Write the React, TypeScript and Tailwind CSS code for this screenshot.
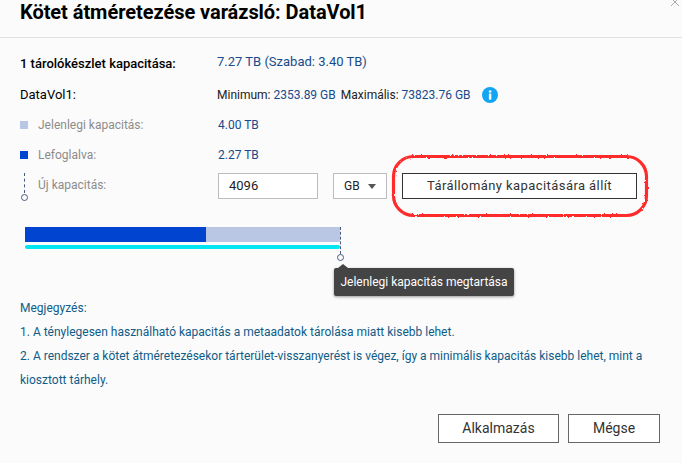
const Row = ({ label, marker, muted, bold, children }: { label: string; marker?: React.ReactNode; muted?: boolean; bold?: boolean; children: React.ReactNode }) => (
  <div className="flex items-center h-[30px]">
    <div className={`w-[197px] flex items-center ${muted ? "text-[12px] text-[#8c8c8c]" : "text-[13px] text-black"} ${bold ? "font-medium pb-[2px]" : ""}`}>
      {marker && <div className="w-[18px] flex justify-start">{marker}</div>}
      <span>{label}</span>
    </div>
    <div className="flex items-center text-[12px]">{children}</div>
  </div>
);

const Val = ({ children }: { children: React.ReactNode }) => <span className="text-[#174a8c]">{children}</span>;

export default function App() {
  return (
    <div className="relative w-[682px] h-[463px] overflow-hidden bg-[#fbfbfb] font-['Roboto',sans-serif]">
      {/* fejléc */}
      <div className="h-[38px] border-b border-[#e2e2e2] pl-[20px] relative">
        <h1 className="text-[20px] leading-[25px] tracking-[-0.05px] font-bold text-black">Kötet átméretezése varázsló: DataVol1</h1>
        <svg className="absolute right-0 top-0" width="12" height="8" viewBox="0 0 12 8">
          <path d="M1 -2L9 6M9 -2L1 6" stroke="#aaa" strokeWidth="1" fill="none" />
        </svg>
      </div>

      <div className="pl-[20px] pt-[12px]">
        <Row label="1 tárolókészlet kapacitása:" bold>
          <span className="text-[13px] text-[#174a8c] mb-[6px]">7.27 TB (Szabad: 3.40 TB)</span>
        </Row>
        <Row label="DataVol1:">
          <span className="text-[#222]">Minimum:&nbsp;</span>
          <Val>2353.89 GB</Val>
          <span className="text-[#222] ml-[5px]">Maximális:&nbsp;</span>
          <Val>73823.76 GB</Val>
          <svg className="ml-[11px]" width="16" height="16" viewBox="0 0 16 16">
            <circle cx="8" cy="8" r="8" fill="#12a5f4" />
            <rect x="6.9" y="6.6" width="2.4" height="6" fill="#fff" />
            <rect x="6.9" y="3.4" width="2.4" height="2.2" fill="#fff" />
          </svg>
        </Row>
        <Row label="Jelenlegi kapacitás:" muted marker={<div className="w-2 h-2 bg-[#b9c7e4]" />}>
          <span className="ml-[1px]"><Val>4.00 TB</Val></span>
        </Row>
        <Row label="Lefoglalva:" muted marker={<div className="w-2 h-2 bg-[#0044d0]" />}>
          <span className="ml-[1px]"><Val>2.27 TB</Val></span>
        </Row>
        <Row
          label="Új kapacitás:"
          muted
          marker={
            <div className="relative h-[16px] w-[8px]">
              <div className="absolute left-[4px] -top-[4px] h-[20px] border-l border-dashed border-[#4a5a80]" />
              <div className="absolute left-[1px] top-[17px] w-[7px] h-[7px] rounded-full border border-[#4a5a80]" />
            </div>
          }
        >
          <div className="flex items-center mt-[2px] ml-[1px]">
            <div className="w-[100px] h-[26px] border border-[#bdbdbd] bg-white pl-[10px] flex items-center text-[13px] text-[#222]">4096</div>
            <div className="ml-[15px] w-[54px] h-[26px] border border-[#bdbdbd] bg-white pl-[10px] pr-[10px] flex items-center justify-between text-[12px] text-[#222]">
              GB
              <span className="w-0 h-0 border-x-[4px] border-x-transparent border-t-[5px] border-t-[#555]" />
            </div>
            <button className="ml-[15px] w-[235px] h-[26px] border border-[#333] bg-white text-[13px] tracking-[0.42px] text-[#333]">Tárállomány kapacitására állít</button>
          </div>
        </Row>

        {/* sáv */}
        <div className="relative ml-[5px] mt-[27px] w-[315px]">
          <div className="flex h-[15px]">
            <div className="w-[181px] bg-[#0044d0]" />
            <div className="flex-1 bg-[#b9c7e4]" />
          </div>
          <div className="mt-[3px] h-[4px] rounded-full bg-[#00e5f2]" />
          <div className="absolute left-[315px] top-0 h-[27px] border-l border-dashed border-[#4a5a80]" />
          <div className="absolute left-[312px] top-[27px] w-[7px] h-[7px] rounded-full border border-[#4a5a80]" />
          {/* tooltip */}
          <div className="absolute left-[309px] top-[41px] w-[180px] h-[28px] rounded-[2px] bg-[#444] shadow-[0_1px_3px_rgba(0,0,0,0.4)] flex items-center justify-center text-[12px] text-white whitespace-nowrap">
            <span className="absolute left-[4px] -top-[4px] w-0 h-0 border-x-[5px] border-x-transparent border-b-[4px] border-b-[#444]" />
            Jelenlegi kapacitás megtartása
          </div>
        </div>

        {/* megjegyzés */}
        <div className="mt-[47px] pr-[30px] text-[12px] leading-[24px] text-[#0f5c88]">
          <p>Megjegyzés:</p>
          <p>1. A ténylegesen használható kapacitás a metaadatok tárolása miatt kisebb lehet.</p>
          <p>2. A rendszer a kötet átméretezésekor tárterület-visszanyerést is végez, így a minimális kapacitás kisebb lehet, mint a kiosztott tárhely.</p>
        </div>

        <div className="mt-[22px] pr-[22px] flex justify-end gap-[9px]">
          <button className="w-[121px] h-[29px] border border-[#666] bg-white text-[14px] text-[#333]">Alkalmazás</button>
          <button className="w-[92px] h-[29px] border border-[#666] bg-white text-[14px] text-[#333]">Mégse</button>
        </div>
      </div>

      {/* piros kézi jelölés */}
      <svg className="absolute left-[386px] top-[150px]" width="268" height="72" viewBox="0 0 268 72">
        <defs>
          <filter id="rough" x="-5%" y="-10%" width="110%" height="120%">
            <feTurbulence type="fractalNoise" baseFrequency="0.5" numOctaves="2" seed="4" />
            <feDisplacementMap in="SourceGraphic" scale="2.5" />
          </filter>
        </defs>
        <rect x="7.5" y="6.5" width="253" height="59" rx="20" fill="none" stroke="#ff2a2a" strokeWidth="3.2" filter="url(#rough)" />
      </svg>
    </div>
  );
}
